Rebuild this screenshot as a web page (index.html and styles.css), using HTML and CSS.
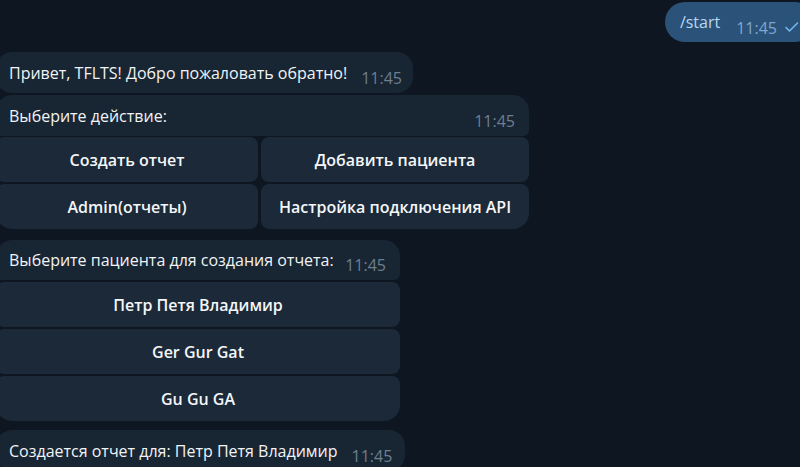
FILE: index.html
```html
<!DOCTYPE html>
<html lang="ru">
<head>
<meta charset="utf-8">
<title>Chat</title>
<link rel="stylesheet" href="styles.css">
</head>
<body>
<div class="chat">
  <div class="row row-out">
    <div class="bubble bubble-out">
      <span class="cmd">/start</span>
      <span class="time time-out">11:45</span>
      <svg class="check" width="14" height="10" viewBox="0 0 14 10"><path d="M1 5.5 L4.5 9 L12.5 1" fill="none" stroke="#72b8f0" stroke-width="1.6" stroke-linecap="round" stroke-linejoin="round"/></svg>
    </div>
  </div>

  <div class="row row-in">
    <div class="bubble bubble-in">
      <span class="text">Привет, TFLTS! Добро пожаловать обратно!</span>
      <span class="time">11:45</span>
    </div>
  </div>

  <div class="group group-wide">
    <div class="bubble bubble-in bubble-fill">
      <span class="text">Выберите действие:</span>
      <span class="time">11:45</span>
    </div>
    <div class="keyboard keyboard-two">
      <div class="kbtn">Создать отчет</div>
      <div class="kbtn">Добавить пациента</div>
      <div class="kbtn">Admin(отчеты)</div>
      <div class="kbtn">Настройка подключения API</div>
    </div>
  </div>

  <div class="group group-mid">
    <div class="bubble bubble-in bubble-fill bubble-short">
      <span class="text">Выберите пациента для создания отчета:</span>
      <span class="time">11:45</span>
    </div>
    <div class="keyboard">
      <div class="kbtn">Петр Петя Владимир</div>
      <div class="kbtn">Ger Gur Gat</div>
      <div class="kbtn">Gu Gu GA</div>
    </div>
  </div>

  <div class="row row-in">
    <div class="bubble bubble-in bubble-last">
      <span class="text">Создается отчет для: Петр Петя Владимир</span>
      <span class="time">11:45</span>
    </div>
  </div>
</div>
</body>
</html>
```

FILE: styles.css
```css
* { box-sizing: border-box; }
html, body {
  margin: 0;
  padding: 0;
  width: 800px;
  height: 467px;
  overflow: hidden;
  background: #0e1621;
}
body {
  font-family: "Open Sans", "Noto Sans", sans-serif;
  color: #f1f3f5;
}
.chat {
  display: flex;
  flex-direction: column;
  padding-top: 2px;
}
.row { display: flex; }
.row-out { justify-content: flex-end; margin-right: -15px; }
.row-in { margin-left: -4px; }
.row-out + .row-in { margin-top: 10px; }
.row-in + .group { margin-top: 2px; }
.group + .group { margin-top: 11px; }
.group + .row-in { margin-top: 9px; }

.bubble {
  display: flex;
  align-items: flex-end;
  height: 41px;
  border-radius: 16px;
  padding: 0 11px 0 13px;
}
.bubble-short { height: 40px; }
.bubble-in { background: #182533; }
.bubble-out {
  background: #2b5278;
  border-radius: 20px;
  padding: 0 16px 0 15px;
  height: 40px;
}
.text {
  font-size: 16px;
  line-height: 20px;
  padding-bottom: 10px;
  white-space: nowrap;
}
.time {
  font-size: 16px;
  line-height: 20px;
  color: #6d7f8f;
  margin-left: 14px;
  padding-bottom: 5px;
  white-space: nowrap;
}
.cmd {
  font-size: 16px;
  line-height: 20px;
  padding-bottom: 10px;
  color: #b8d7f3;
}
.time-out { color: #7fa7cf; margin-left: 16px; padding-bottom: 4px; }
.check { margin-left: 8px; margin-bottom: 10px; }

.group {
  display: flex;
  flex-direction: column;
  margin-left: -4px;
}
.group-wide { width: 533px; }
.group-mid { width: 404px; }
.bubble-fill .time { margin-left: auto; }
.bubble-fill { padding-right: 14px; border-radius: 16px 16px 6px 6px; }

.keyboard {
  display: grid;
  grid-template-columns: 1fr;
  gap: 2px;
  margin-top: 2px;
}
.keyboard-two {
  grid-template-columns: 262px 1fr;
  column-gap: 3px;
  margin-top: 1px;
}
.kbtn {
  height: 45px;
  display: flex;
  align-items: center;
  justify-content: center;
  background: #1b2938;
  border-radius: 8px;
  font-weight: 600;
  font-size: 16px;
  color: #f4f6f8;
  white-space: nowrap;
}
.keyboard .kbtn:nth-last-child(1) { border-bottom-right-radius: 16px; }
.keyboard-two .kbtn:nth-last-child(2),
.group-mid .kbtn:last-child { border-bottom-left-radius: 16px; }
.bubble-last { padding-right: 13px; }
```
